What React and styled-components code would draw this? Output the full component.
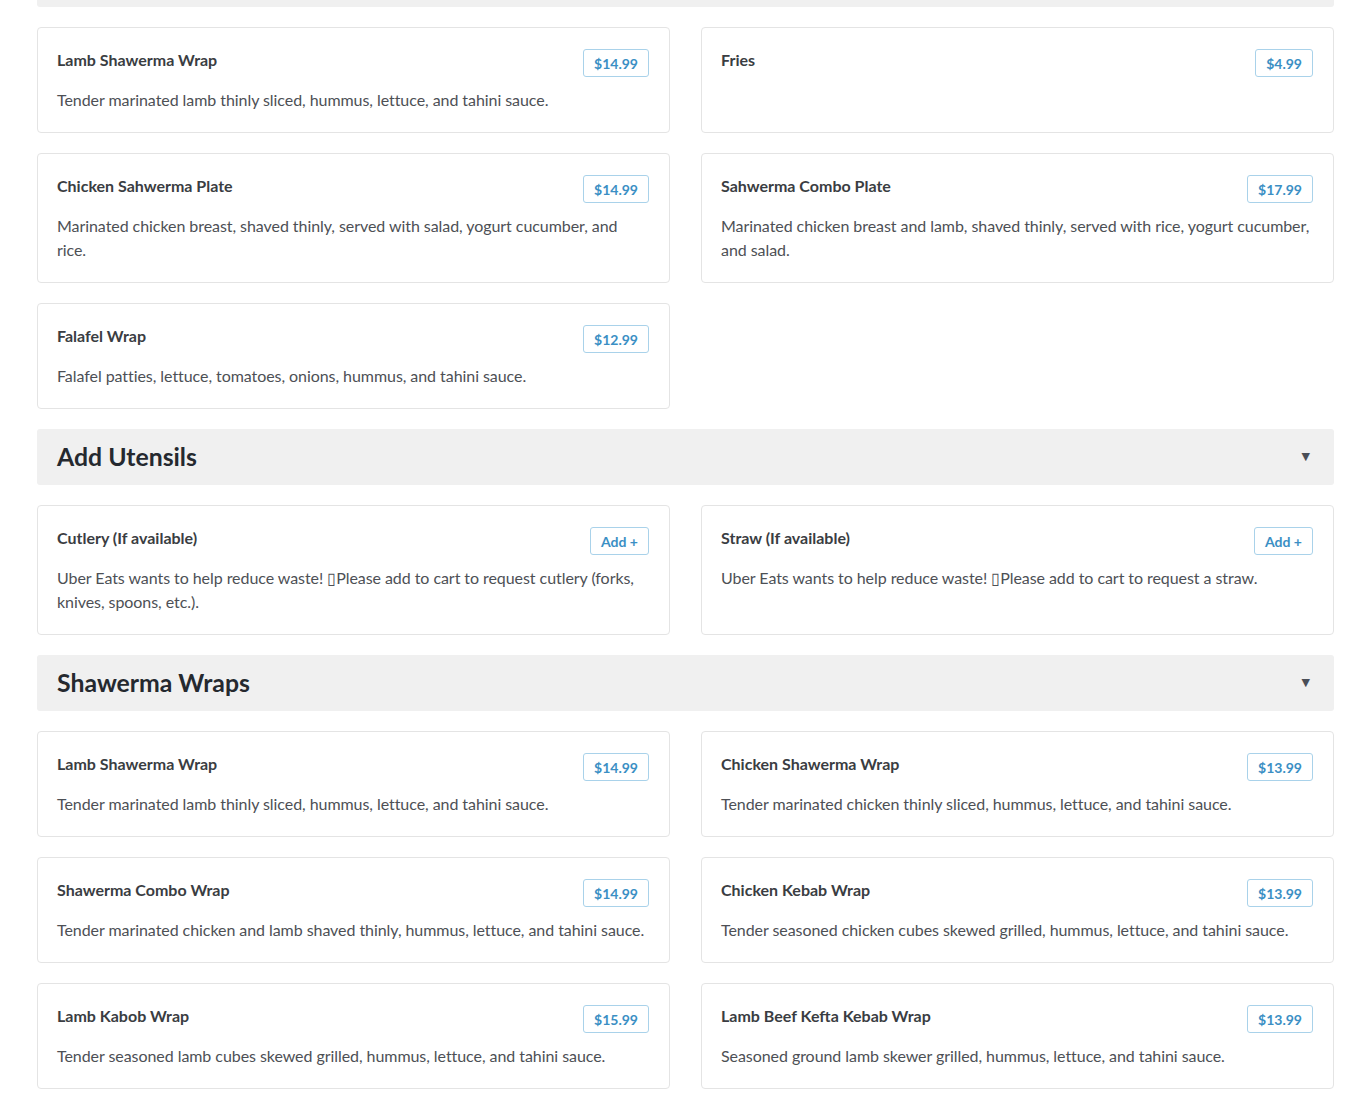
import React from 'react'
import styled, { createGlobalStyle } from 'styled-components'

const GlobalStyle = createGlobalStyle`
  body {
    margin: 0;
    background: #fff;
    font-family: Lato, "Open Sans", sans-serif;
  }
`

const Page = styled.div`
  padding: 0 36px 40px 37px;
  margin-top: -49px;
  display: flex;
  flex-direction: column;
  gap: 20px;
`

const SectionHeader = styled.div`
  height: 56px;
  background: #f0f0f0;
  border-radius: 3px;
  display: flex;
  align-items: center;
  justify-content: space-between;
  padding: 0 24px 2px 20px;
  box-sizing: border-box;
`

const SectionTitle = styled.h2`
  margin: 0;
  font-size: 24.8px;
  font-weight: 700;
  color: #25292f;
`

const Caret = styled.span`
  font-size: 11px;
  color: #4a4f57;
  font-family: "DejaVu Sans", sans-serif;
`

const Grid = styled.div`
  display: grid;
  grid-template-columns: 1fr 1fr;
  column-gap: 31px;
  row-gap: 20px;
`

const Card = styled.div`
  border: 1px solid #e4e4e4;
  border-radius: 4px;
  padding: 20px 20px 20px 19px;
  background: #fff;
`

const CardHead = styled.div`
  display: flex;
  justify-content: space-between;
  align-items: flex-start;
  gap: 16px;
`

const ItemName = styled.div`
  font-size: 16px;
  line-height: 24px;
  font-weight: 700;
  color: #3a3d42;
`

const PriceButton = styled.button`
  margin-top: 1px;
  height: 28px;
  padding: 0 10px;
  border: 1px solid #a9d2ea;
  border-radius: 3px;
  background: #fff;
  color: #3b8fc4;
  font-family: Lato, sans-serif;
  font-size: 14px;
  font-weight: 700;
  cursor: pointer;
  flex-shrink: 0;
`

const Description = styled.p`
  margin: 11px 0 0;
  font-size: 16px;
  line-height: 24px;
  letter-spacing: -0.06px;
  color: #4d5055;
`

const sections = [
  {
    title: 'Popular Items',
    items: [],
  },
  {
    title: null,
    items: [
      { name: 'Lamb Shawerma Wrap', price: '$14.99', desc: 'Tender marinated lamb thinly sliced, hummus, lettuce, and tahini sauce.' },
      { name: 'Fries', price: '$4.99', desc: '' },
      { name: 'Chicken Sahwerma Plate', price: '$14.99', desc: 'Marinated chicken breast, shaved thinly, served with salad, yogurt cucumber, and rice.' },
      { name: 'Sahwerma Combo Plate', price: '$17.99', desc: 'Marinated chicken breast and lamb, shaved thinly, served with rice, yogurt cucumber, and salad.' },
      { name: 'Falafel Wrap', price: '$12.99', desc: 'Falafel patties, lettuce, tomatoes, onions, hummus, and tahini sauce.' },
    ],
  },
  {
    title: 'Add Utensils',
    items: [
      { name: 'Cutlery (If available)', price: 'Add +', desc: 'Uber Eats wants to help reduce waste! \u25AFPlease add to cart to request cutlery (forks, knives, spoons, etc.).' },
      { name: 'Straw (If available)', price: 'Add +', desc: 'Uber Eats wants to help reduce waste! \u25AFPlease add to cart to request a straw.' },
    ],
  },
  {
    title: 'Shawerma Wraps',
    items: [
      { name: 'Lamb Shawerma Wrap', price: '$14.99', desc: 'Tender marinated lamb thinly sliced, hummus, lettuce, and tahini sauce.' },
      { name: 'Chicken Shawerma Wrap', price: '$13.99', desc: 'Tender marinated chicken thinly sliced, hummus, lettuce, and tahini sauce.' },
      { name: 'Shawerma Combo Wrap', price: '$14.99', desc: 'Tender marinated chicken and lamb shaved thinly, hummus, lettuce, and tahini sauce.' },
      { name: 'Chicken Kebab Wrap', price: '$13.99', desc: 'Tender seasoned chicken cubes skewed grilled, hummus, lettuce, and tahini sauce.' },
      { name: 'Lamb Kabob Wrap', price: '$15.99', desc: 'Tender seasoned lamb cubes skewed grilled, hummus, lettuce, and tahini sauce.' },
      { name: 'Lamb Beef Kefta Kebab Wrap', price: '$13.99', desc: 'Seasoned ground lamb skewer grilled, hummus, lettuce, and tahini sauce.' },
    ],
  },
]

const MenuCard = ({ item }) => (
  <Card>
    <CardHead>
      <ItemName>{item.name}</ItemName>
      <PriceButton>{item.price}</PriceButton>
    </CardHead>
    {item.desc && <Description>{item.desc}</Description>}
  </Card>
)

const App = () => {
  return (
    <>
      <GlobalStyle />
      <Page>
        {sections.map((section, i) => (
          <React.Fragment key={i}>
            {section.title && (
              <SectionHeader>
                <SectionTitle>{section.title}</SectionTitle>
                <Caret>▼</Caret>
              </SectionHeader>
            )}
            {section.items.length > 0 && (
              <Grid>
                {section.items.map((item, j) => (
                  <MenuCard key={j} item={item} />
                ))}
              </Grid>
            )}
          </React.Fragment>
        ))}
      </Page>
    </>
  )
}

export default App
